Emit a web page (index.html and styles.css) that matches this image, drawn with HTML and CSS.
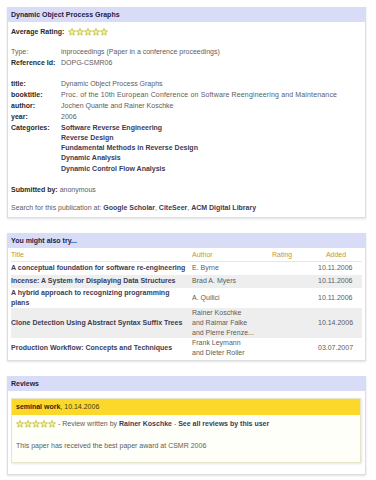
FILE: index.html
```html
<!DOCTYPE html>
<html>
<head>
<meta charset="utf-8">
<link rel="stylesheet" href="styles.css">
</head>
<body>
<svg width="0" height="0" class="defs">
  <defs>
    <symbol id="star" viewBox="0 0 10 10">
      <path d="M5 0.6 L6.3 3.5 L9.4 3.7 L7 5.8 L7.8 8.9 L5 7.2 L2.2 8.9 L3 5.8 L0.6 3.7 L3.7 3.5 Z" fill="#f4f0a0" stroke="#b8b830" stroke-width="0.9" stroke-linejoin="round"/>
    </symbol>
  </defs>
</svg>

<div class="box">
  <div class="box-head">Dynamic Object Process Graphs</div>
  <div class="box-body">
    <div class="rating"><span class="lbl-b">Average Rating:</span>
      <span class="stars"><svg><use href="#star"/></svg><svg><use href="#star"/></svg><svg><use href="#star"/></svg><svg><use href="#star"/></svg><svg><use href="#star"/></svg></span>
    </div>
    <div class="attrs first">
      <span class="lbl">Type:</span><span class="val">inproceedings (Paper in a conference proceedings)</span>
      <span class="lbl-b">Reference Id:</span><span class="val">DOPG-CSMR06</span>
    </div>
    <div class="attrs second">
      <span class="lbl-b">title:</span><span class="val">Dynamic Object Process Graphs</span>
      <span class="lbl-b">booktitle:</span><span class="val wide">Proc. of the 10th European Conference on Software Reengineering and Maintenance</span>
      <span class="lbl-b">author:</span><span class="val">Jochen Quante and Rainer Koschke</span>
      <span class="lbl-b">year:</span><span class="val">2006</span>
      <span class="lbl-b">Categories:</span>
      <span class="cats">
        <a>Software Reverse Engineering</a>
        <a>Reverse Design</a>
        <a>Fundamental Methods in Reverse Design</a>
        <a>Dynamic Analysis</a>
        <a>Dynamic Control Flow Analysis</a>
      </span>
    </div>
    <div class="submitted"><span class="lbl-b">Submitted by:</span> <span class="val">anonymous</span></div>
    <div class="search"><span class="val">Search for this publication at: </span><a>Google Scholar</a>, <a>CiteSeer</a>, <a>ACM Digital Library</a></div>
  </div>
</div>

<div class="box">
  <div class="box-head">You might also try...</div>
  <div class="box-body tight">
    <table class="try">
      <colgroup><col class="c-title"><col class="c-author"><col class="c-rating"><col class="c-added"></colgroup>
      <thead>
        <tr><th>Title</th><th>Author</th><th>Rating</th><th class="h-added">Added</th></tr>
      </thead>
      <tbody>
        <tr><td class="t"><a>A conceptual foundation for software re-engineering</a></td><td>E. Byrne</td><td></td><td class="d">10.11.2006</td></tr>
        <tr class="alt"><td class="t"><a>Incense: A System for Displaying Data Structures</a></td><td>Brad A. Myers</td><td></td><td class="d">10.11.2006</td></tr>
        <tr><td class="t"><a>A hybrid approach to recognizing programming plans</a></td><td>A. Quilici</td><td></td><td class="d">10.11.2006</td></tr>
        <tr class="alt"><td class="t"><a>Clone Detection Using Abstract Syntax Suffix Trees</a></td><td>Rainer Koschke<br>and Raimar Falke<br>and Pierre Frenze...</td><td></td><td class="d">10.14.2006</td></tr>
        <tr><td class="t"><a>Production Workflow: Concepts and Techniques</a></td><td>Frank Leymann<br>and Dieter Roller</td><td></td><td class="d">03.07.2007</td></tr>
      </tbody>
    </table>
  </div>
</div>

<div class="box">
  <div class="box-head">Reviews</div>
  <div class="box-body rev-wrap">
    <div class="review">
      <div class="review-head"><b>seminal work</b>, 10.14.2006</div>
      <div class="review-body">
        <div class="review-by"><span class="stars"><svg><use href="#star"/></svg><svg><use href="#star"/></svg><svg><use href="#star"/></svg><svg><use href="#star"/></svg><svg><use href="#star"/></svg></span><span class="val"> - Review written by </span><a>Rainer Koschke</a><span class="val"> - </span><a>See all reviews by this user</a></div>
        <div class="review-text">This paper has received the best paper award at CSMR 2006</div>
      </div>
    </div>
  </div>
</div>
</body>
</html>
```
FILE: styles.css
```css
html, body {
  margin: 0;
  padding: 0;
  background: #fff;
}
body {
  padding: 7px 10px 0 7px;
  font-family: "Liberation Sans", Arial, sans-serif;
  font-size: 7px;
  line-height: 11px;
  color: #5a5a5a;
}
.defs { position: absolute; }
.box {
  border: 1px solid #dedede;
  border-top: none;
  box-shadow: 0 1px 2px rgba(0,0,0,0.12);
  margin-bottom: 15px;
  background: #fff;
}
.box-head {
  background: #d9dcf7;
  color: #1c1c48;
  font-weight: bold;
  padding: 2px 3px;
  height: 11px;
  line-height: 11px;
}
.box-body {
  padding: 4px 3px 4px 3px;
}
.lbl-b { font-weight: bold; color: #2a2a2a; }
.lbl, .val, .try td, .review-text { color: #5c5c5c; }
.val.wide { letter-spacing: 0.15px; }
a { color: #3c3c56; font-weight: bold; }
.rating {
  display: flex;
  align-items: center;
  gap: 4px;
  height: 11px;
}
.stars { display: inline-flex; gap: 0; vertical-align: middle; }
.stars svg { width: 8px; height: 8px; }
.attrs {
  display: grid;
  grid-template-columns: 50px 1fr;
  margin-top: 9px;
}
.attrs.second { margin-top: 10px; }
.cats { display: flex; flex-direction: column; line-height: 10.3px; margin-top: 0.5px; }
.submitted { margin-top: 10px; }
.search { margin-top: 7px; }
.box-body.tight { padding: 0 3px 2px 3px; }
.try {
  width: 100%;
  border-collapse: collapse;
  table-layout: fixed;
}
.try col.c-title { width: 181px; }
.try col.c-author { width: 80px; }
.try col.c-rating { width: 46px; }
.try th {
  color: #c8952e;
  font-weight: normal;
  text-align: left;
  padding: 2px 0 2px 0;
  line-height: 9px;
  border-bottom: 1px solid #e6e6e6;
}
.try th.h-added { text-align: center; padding-right: 8px; }
.try td {
  padding: 0;
  height: 13px;
  vertical-align: middle;
  line-height: 10px;
}
.try td.t { padding-right: 5px; }
.try td.d { text-align: right; padding-right: 10px; }
.try tr.alt td { background: #eeeeee; }
.rev-wrap { padding: 7px 4px 11px 3px; }
.review {
  border: 1px solid #e8e4c8;
  box-shadow: 1px 1px 2px rgba(0,0,0,0.1);
  background: #fffff9;
}
.review-head {
  background: #fcd82a;
  color: #3a3a1a;
  padding: 2px 4px;
  height: 12px;
  line-height: 12px;
}
.review-head b { color: #2a2a10; }
.review-body { padding: 3px 4px 11px 4px; }
.review-by { display: flex; align-items: center; height: 12px; white-space: pre; }
.review-text { margin-top: 10px; }
```
